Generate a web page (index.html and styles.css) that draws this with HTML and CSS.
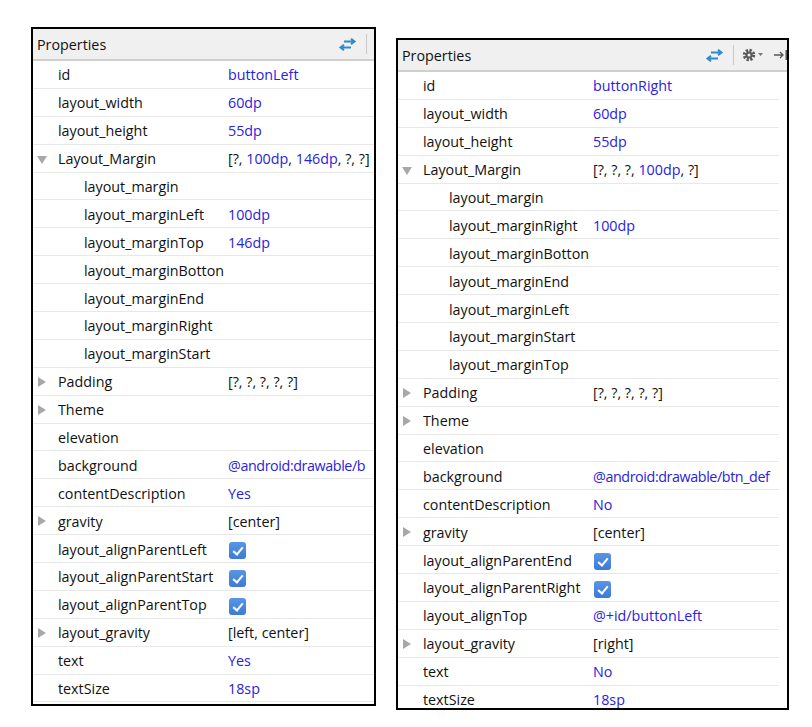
FILE: index.html
```html
<!DOCTYPE html>
<html>
<head>
<meta charset="utf-8">
<link rel="stylesheet" href="styles.css">
</head>
<body>
<div class="stage">
  <section class="panel panel-left">
    <header class="ph">
      <span class="title">Properties</span>
      <span class="tools">
        <svg class="swap" width="19" height="13" viewBox="0 0 19 13"><path d="M6 3.5H16M13 0.8L16.5 3.5L13 6.2M13 9.5H3M6 6.8L2.5 9.5L6 12.2" fill="none" stroke="#2e8bc9" stroke-width="2"/></svg>
        <span class="vsep"></span>
      </span>
    </header>
    <div class="rows">
      <div class="row"><span class="tw"></span><span class="name">id</span><span class="val b">buttonLeft</span></div>
      <div class="row"><span class="tw"></span><span class="name">layout_width</span><span class="val b">60dp</span></div>
      <div class="row"><span class="tw"></span><span class="name">layout_height</span><span class="val b">55dp</span></div>
      <div class="row"><span class="tw open"></span><span class="name">Layout_Margin</span><span class="val">[?, <span class="b">100dp</span>, <span class="b">146dp</span>, ?, ?]</span></div>
      <div class="row"><span class="tw"></span><span class="name sub">layout_margin</span><span class="val"></span></div>
      <div class="row"><span class="tw"></span><span class="name sub">layout_marginLeft</span><span class="val b">100dp</span></div>
      <div class="row"><span class="tw"></span><span class="name sub">layout_marginTop</span><span class="val b">146dp</span></div>
      <div class="row"><span class="tw"></span><span class="name sub">layout_marginBotton</span><span class="val"></span></div>
      <div class="row"><span class="tw"></span><span class="name sub">layout_marginEnd</span><span class="val"></span></div>
      <div class="row"><span class="tw"></span><span class="name sub">layout_marginRight</span><span class="val"></span></div>
      <div class="row"><span class="tw"></span><span class="name sub">layout_marginStart</span><span class="val"></span></div>
      <div class="row"><span class="tw closed"></span><span class="name">Padding</span><span class="val">[?, ?, ?, ?, ?]</span></div>
      <div class="row"><span class="tw closed"></span><span class="name">Theme</span><span class="val"></span></div>
      <div class="row"><span class="tw"></span><span class="name">elevation</span><span class="val"></span></div>
      <div class="row"><span class="tw"></span><span class="name">background</span><span class="val b narrow">@android:drawable/b</span></div>
      <div class="row"><span class="tw"></span><span class="name">contentDescription</span><span class="val b">Yes</span></div>
      <div class="row"><span class="tw closed"></span><span class="name">gravity</span><span class="val">[center]</span></div>
      <div class="row"><span class="tw"></span><span class="name">layout_alignParentLeft</span><span class="val"><span class="cb"></span></span></div>
      <div class="row"><span class="tw"></span><span class="name">layout_alignParentStart</span><span class="val"><span class="cb"></span></span></div>
      <div class="row"><span class="tw"></span><span class="name">layout_alignParentTop</span><span class="val"><span class="cb"></span></span></div>
      <div class="row"><span class="tw closed"></span><span class="name">layout_gravity</span><span class="val">[left, center]</span></div>
      <div class="row"><span class="tw"></span><span class="name">text</span><span class="val b">Yes</span></div>
      <div class="row"><span class="tw"></span><span class="name">textSize</span><span class="val b">18sp</span></div>
    </div>
  </section>

  <section class="panel panel-right">
    <header class="ph">
      <span class="title">Properties</span>
      <span class="tools">
        <svg class="swap" width="19" height="13" viewBox="0 0 19 13"><path d="M6 3.5H16M13 0.8L16.5 3.5L13 6.2M13 9.5H3M6 6.8L2.5 9.5L6 12.2" fill="none" stroke="#2e8bc9" stroke-width="2"/></svg>
        <span class="vsep"></span>
        <svg class="gear" width="14" height="14" viewBox="0 0 14 14"><circle cx="7" cy="7" r="4.6" fill="none" stroke="#5a5a5a" stroke-width="3.2" stroke-dasharray="2.2 1.4"/><circle cx="7" cy="7" r="3.6" fill="#5a5a5a"/><circle cx="7" cy="7" r="1.5" fill="#f0f0f0"/></svg>
        <svg class="caret" width="5" height="4" viewBox="0 0 5 4"><path d="M0 0H5L2.5 3Z" fill="#777"/></svg>
        <svg class="pin" width="16" height="12" viewBox="0 0 16 12"><path d="M0 6H9M6 3L9 6L6 9" fill="none" stroke="#555" stroke-width="1.3"/><path d="M12.5 1V11" stroke="#555" stroke-width="2"/></svg>
      </span>
    </header>
    <div class="rows">
      <div class="row"><span class="tw"></span><span class="name">id</span><span class="val b">buttonRight</span></div>
      <div class="row"><span class="tw"></span><span class="name">layout_width</span><span class="val b">60dp</span></div>
      <div class="row"><span class="tw"></span><span class="name">layout_height</span><span class="val b">55dp</span></div>
      <div class="row"><span class="tw open"></span><span class="name">Layout_Margin</span><span class="val">[?, ?, ?, <span class="b">100dp</span>, ?]</span></div>
      <div class="row"><span class="tw"></span><span class="name sub">layout_margin</span><span class="val"></span></div>
      <div class="row"><span class="tw"></span><span class="name sub">layout_marginRight</span><span class="val b">100dp</span></div>
      <div class="row"><span class="tw"></span><span class="name sub">layout_marginBotton</span><span class="val"></span></div>
      <div class="row"><span class="tw"></span><span class="name sub">layout_marginEnd</span><span class="val"></span></div>
      <div class="row"><span class="tw"></span><span class="name sub">layout_marginLeft</span><span class="val"></span></div>
      <div class="row"><span class="tw"></span><span class="name sub">layout_marginStart</span><span class="val"></span></div>
      <div class="row"><span class="tw"></span><span class="name sub">layout_marginTop</span><span class="val"></span></div>
      <div class="row"><span class="tw closed"></span><span class="name">Padding</span><span class="val">[?, ?, ?, ?, ?]</span></div>
      <div class="row"><span class="tw closed"></span><span class="name">Theme</span><span class="val"></span></div>
      <div class="row"><span class="tw"></span><span class="name">elevation</span><span class="val"></span></div>
      <div class="row"><span class="tw"></span><span class="name">background</span><span class="val b narrow">@android:drawable/btn_def</span></div>
      <div class="row"><span class="tw"></span><span class="name">contentDescription</span><span class="val b">No</span></div>
      <div class="row"><span class="tw closed"></span><span class="name">gravity</span><span class="val">[center]</span></div>
      <div class="row"><span class="tw"></span><span class="name">layout_alignParentEnd</span><span class="val"><span class="cb"></span></span></div>
      <div class="row"><span class="tw"></span><span class="name">layout_alignParentRight</span><span class="val"><span class="cb"></span></span></div>
      <div class="row"><span class="tw"></span><span class="name">layout_alignTop</span><span class="val b">@+id/buttonLeft</span></div>
      <div class="row"><span class="tw closed"></span><span class="name">layout_gravity</span><span class="val">[right]</span></div>
      <div class="row"><span class="tw"></span><span class="name">text</span><span class="val b">No</span></div>
      <div class="row"><span class="tw"></span><span class="name">textSize</span><span class="val b">18sp</span></div>
    </div>
  </section>
</div>
</body>
</html>
```

FILE: styles.css
```css
html, body {
  margin: 0;
  padding: 0;
  background: #fff;
}

.stage {
  display: flex;
  align-items: flex-start;
  gap: 20px;
  padding: 27px 0 0 31px;
  font-family: "Open Sans", "Noto Sans", sans-serif;
  font-size: 14.3px;
  color: #111;
}

.panel {
  border: 2px solid #000;
  background: #fff;
  overflow: hidden;
  box-sizing: border-box;
  display: flex;
  flex-direction: column;
}

.panel-left {
  width: 345px;
  height: 679px;
}

.panel-right {
  width: 393px;
  height: 672px;
  margin-top: 11px;
}

.ph {
  flex: none;
  height: 30px;
  border-bottom: 2px solid #cfcfcf;
  background: #f0f0f0;
  display: flex;
  align-items: center;
  padding-left: 4px;
  overflow: hidden;
}

.title {
  color: #111;
  padding-top: 1px;
}

.tools {
  margin-left: auto;
  display: flex;
  align-items: center;
}

.panel-left .tools {
  padding-right: 7px;
}

.swap {
  display: block;
}

.vsep {
  width: 1px;
  height: 20px;
  background: #c8c8c8;
  margin-left: 9px;
}

.gear {
  display: block;
  margin-left: 8px;
}

.caret {
  display: block;
  margin-left: 2px;
}

.pin {
  display: block;
  margin-left: 11px;
  margin-right: -3px;
}

.rows {
  display: flex;
  flex-direction: column;
}

.panel-right .rows {
  margin-right: 8px;
}

.row {
  flex: none;
  height: 27.9px;
  box-sizing: border-box;
  border-bottom: 1px solid #e8e8e8;
  padding-top: 1px;
  display: grid;
  grid-template-columns: 25px 170px 1fr;
  align-items: center;
  white-space: nowrap;
}

.tw {
  position: relative;
  height: 100%;
}

.tw.closed::before {
  content: "";
  position: absolute;
  left: 5px;
  top: 50%;
  margin-top: -5px;
  border-left: 8px solid #a8a8a8;
  border-top: 5px solid transparent;
  border-bottom: 5px solid transparent;
}

.tw.open::before {
  content: "";
  position: absolute;
  left: 4px;
  top: 50%;
  margin-top: -3px;
  border-top: 8px solid #a8a8a8;
  border-left: 5px solid transparent;
  border-right: 5px solid transparent;
}

.name {
  overflow: hidden;
}

.name.sub {
  padding-left: 26px;
}

.val {
  overflow: hidden;
  color: #111;
}

.b {
  color: #2a22e0;
}

.narrow {
  letter-spacing: -0.4px;
}

.cb {
  display: inline-block;
  vertical-align: middle;
  width: 17px;
  height: 17px;
  border-radius: 3px;
  background: linear-gradient(#5a95e4, #3c7bd6);
  position: relative;
  margin-left: 1px;
}

.cb::after {
  content: "";
  position: absolute;
  left: 6px;
  top: 3px;
  width: 4px;
  height: 8px;
  border-right: 2px solid #fff;
  border-bottom: 2px solid #fff;
  transform: rotate(40deg);
}
```
